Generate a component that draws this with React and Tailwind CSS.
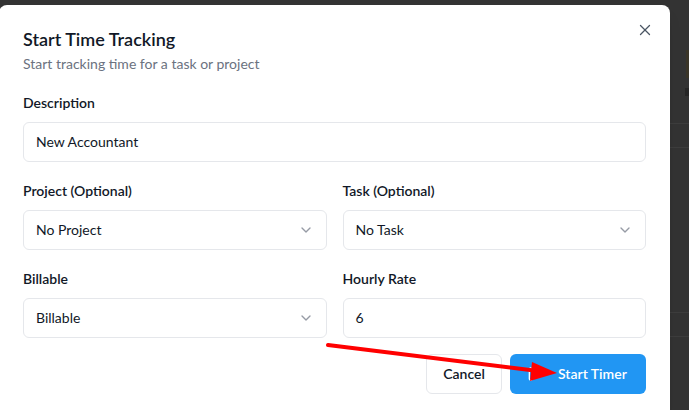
import { X, ChevronDown, Play } from 'lucide-react';

function Field({ label, children }) {
    return (
        <div className="flex flex-col gap-[9px]">
            <label className="text-sm leading-5 font-semibold text-[#111827]">{label}</label>
            {children}
        </div>
    );
}

function Select({ value }) {
    return (
        <div className="h-10 flex items-center justify-between px-3 rounded-md border border-[#e5e7eb] bg-white text-sm text-[#111827]">
            <span>{value}</span>
            <ChevronDown size={16} className="text-[#6b7280] opacity-70" />
        </div>
    );
}

function Input({ value }) {
    return (
        <div className="h-10 flex items-center px-3 rounded-md border border-[#e5e7eb] bg-white text-sm text-[#111827]">
            {value}
        </div>
    );
}

export default function App() {
    return (
        <div
            className="relative w-[689px] h-[410px] overflow-hidden bg-[#333333]"
            style={{ fontFamily: 'Lato, "Noto Sans", sans-serif' }}
        >
            {/* page behind the overlay */}
            <div className="absolute left-[670px] top-[123px] w-[19px] h-[25px] border-y border-[#3d3d3d]" />
            <div className="absolute left-[670px] top-[312px] w-[19px] h-[25px] border-y border-[#3d3d3d]" />
            <div className="absolute left-[686px] top-[50px] w-[3px] h-[28px] bg-[#3a3528]" />
            <div className="absolute left-[685px] top-[88px] w-[4px] h-[8px] bg-[#262626]" />

            {/* dialog */}
            <div className="absolute left-[-1px] top-[5px] w-[671px] bg-white rounded-lg shadow-lg p-6">
                <button className="absolute right-[16px] top-[16px] text-[#4b5563]">
                    <X size={18} strokeWidth={1.75} />
                </button>

                <div className="flex flex-col">
                    <h2 className="-mt-[2px] text-lg leading-6 font-semibold text-[#111827]">Start Time Tracking</h2>
                    <p className="mt-[3px] text-sm leading-5 text-[#6b7280]">Start tracking time for a task or project</p>
                </div>

                <div className="mt-[19px] flex flex-col gap-[19px]">
                    <Field label="Description">
                        <Input value="New Accountant" />
                    </Field>

                    <div className="grid grid-cols-2 gap-4">
                        <Field label="Project (Optional)">
                            <Select value="No Project" />
                        </Field>
                        <Field label="Task (Optional)">
                            <Select value="No Task" />
                        </Field>
                    </div>

                    <div className="grid grid-cols-2 gap-4">
                        <Field label="Billable">
                            <Select value="Billable" />
                        </Field>
                        <Field label="Hourly Rate">
                            <Input value="6" />
                        </Field>
                    </div>
                </div>

                <div className="mt-4 flex justify-end gap-2">
                    <button className="h-10 w-[76px] rounded-md border border-[#e5e7eb] bg-white text-sm font-semibold text-[#111827]">
                        Cancel
                    </button>
                    <button className="h-10 w-[136px] rounded-md bg-[#2196f3] text-white text-sm font-semibold flex items-center pl-4">
                        <Play size={16} />
                        <span className="ml-4">Start Timer</span>
                    </button>
                </div>
            </div>

            {/* red annotation arrow */}
            <svg className="absolute inset-0 pointer-events-none" width="689" height="410">
                <line x1="328" y1="345" x2="538" y2="371" stroke="#ff0000" strokeWidth="4" strokeLinecap="round" />
                <polygon points="532,362 557,373 530,381" fill="#ff0000" />
            </svg>
        </div>
    );
}
